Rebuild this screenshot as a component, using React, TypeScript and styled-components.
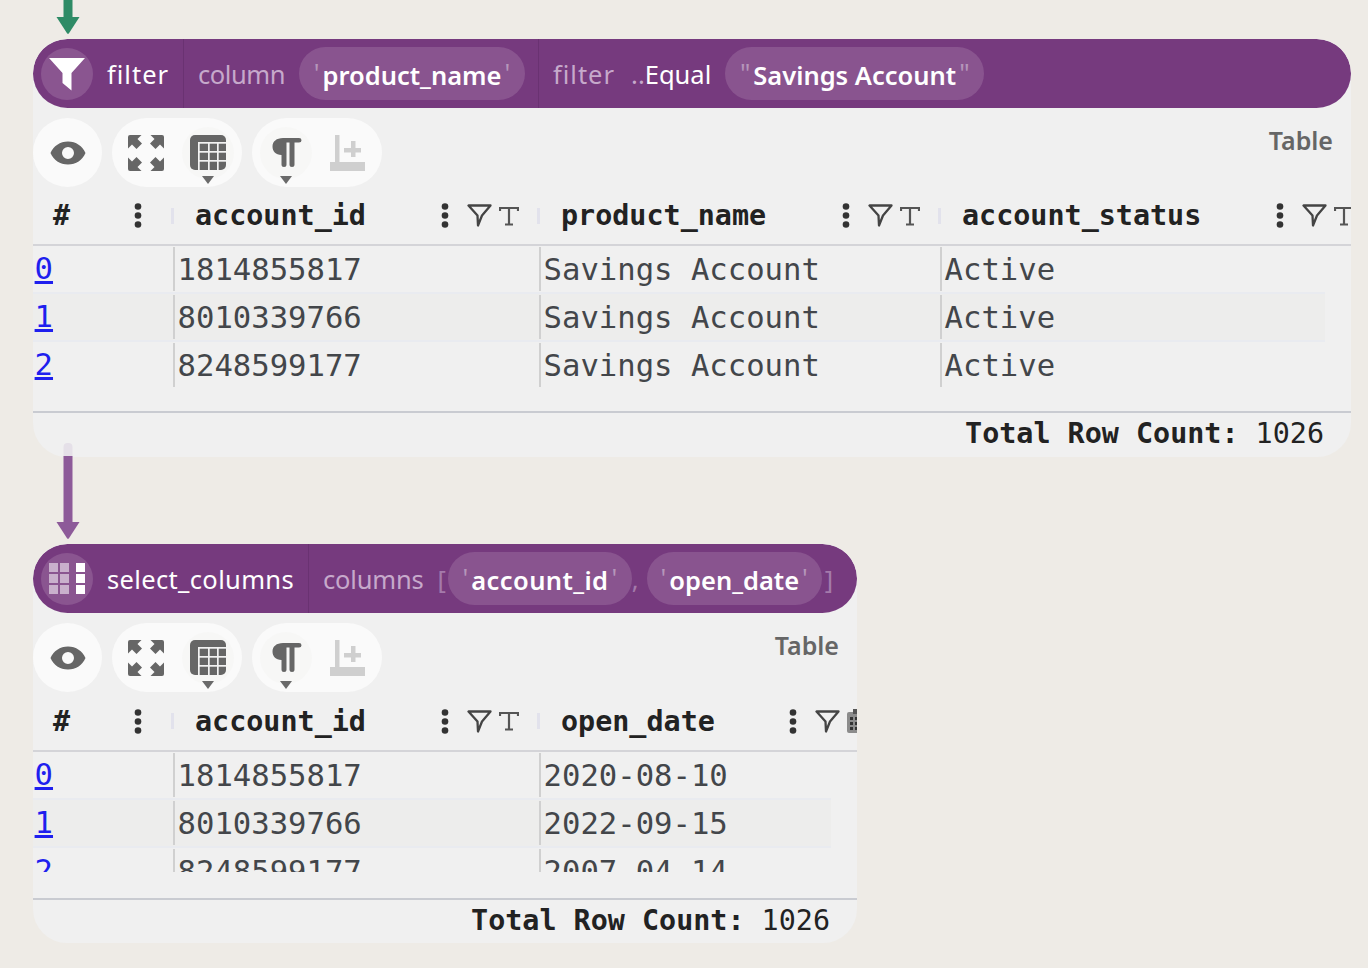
import React from "react";
import styled, { createGlobalStyle } from "styled-components";

const Global = createGlobalStyle`
  html, body { margin: 0; padding: 0; background: #eeebe6; }
  body { width: 1368px; height: 968px; overflow: hidden; }
`;

const Page = styled.div`
  width: 1368px;
  height: 968px;
  padding-left: 33px;
  box-sizing: border-box;
  font-family: "Noto Sans", sans-serif;
  font-variant-ligatures: none;
`;

const TopLink = styled.div`
  height: 39px;
  margin-left: 23px;
`;

const Link = styled.div`
  position: relative;
  height: 87px;
  margin-left: 23px;
  & > svg { position: absolute; top: -14px; left: 0; }
`;

const Card = styled.section<{ $w: number }>`
  width: ${(p) => p.$w}px;
  background: #f0f0f0;
  border-radius: 34px;
  overflow: hidden;
`;

const Bar = styled.header`
  height: 69px;
  background: #763a7e;
  border-radius: 35px;
  display: flex;
  align-items: center;
  color: #fff;
  font-size: 25.5px;
  white-space: nowrap;
`;

const TitleCell = styled.div`
  height: 100%;
  display: flex;
  align-items: center;
  padding: 0 14px 0 8px;
  border-right: 1px solid #6a3272;
`;

const Title = styled.span<{ $spread: number }>`
  letter-spacing: ${(p) => p.$spread}px;
`;

const Badge = styled.div`
  width: 52px;
  height: 52px;
  border-radius: 50%;
  background: #8a5590;
  display: flex;
  align-items: center;
  justify-content: center;
  margin-right: 14px;
`;

const Args = styled.div<{ $edge?: boolean }>`
  display: flex;
  align-items: center;
  height: 100%;
  padding: 0 ${(p) => (p.$edge ? 13 : 14)}px 0 14px;
  border-right: ${(p) => (p.$edge ? "1px solid #6a3272" : "0")};
`;

const Faint = styled.span<{ $gap?: number; $spread?: number }>`
  color: #c6a9cb;
  margin-right: ${(p) => p.$gap ?? 14}px;
  letter-spacing: ${(p) => p.$spread ?? 0}px;
`;

const Bracket = styled.span<{ $left?: number; $right?: number }>`
  color: #a47aab;
  margin-left: ${(p) => p.$left ?? 0}px;
  margin-right: ${(p) => p.$right ?? 0}px;
`;

const Equal = styled.span`
  color: #fff;
  margin-right: 14px;
`;

const Pill = styled.div<{ $w: number }>`
  width: ${(p) => p.$w}px;
  height: 53px;
  padding-top: 2px;
  box-sizing: border-box;
  border-radius: 27px;
  background: #89548f;
  display: flex;
  align-items: center;
  justify-content: center;
  font-weight: 600;
  gap: 3px;
  flex-shrink: 0;
`;

const PillText = styled.span<{ $spread: number }>`
  letter-spacing: ${(p) => p.$spread}px;
`;

const Quote = styled.span`
  color: #b596ba;
  font-weight: 400;
  align-self: center;
  margin-top: -6px;
`;

const ToolbarRow = styled.div`
  height: 69px;
  margin-top: 10px;
  display: flex;
  gap: 10px;
  position: relative;
`;

const ToolPill = styled.div<{ $w: number }>`
  width: ${(p) => p.$w}px;
  height: 69px;
  border-radius: 35px;
  background: #fafafa;
  display: flex;
  align-items: center;
  justify-content: center;
`;

const ToolSlot = styled.div<{ $active?: boolean }>`
  width: 52px;
  height: 52px;
  margin: 0 5px;
  display: flex;
  align-items: center;
  justify-content: center;
  border-radius: 50%;
  position: relative;
  background: ${(p) => (p.$active ? "#f7f7f6" : "transparent")};
`;

const Caret = styled.span`
  position: absolute;
  left: 50%;
  bottom: -5px;
  margin-left: -6px;
  width: 0;
  height: 0;
  border-left: 6px solid transparent;
  border-right: 6px solid transparent;
  border-top: 8px solid #6a6a6a;
`;

const Spacer = styled.div`
  flex: 1;
`;

const KindLabel = styled.div`
  font-size: 25px;
  font-weight: 600;
  color: #666;
  padding-right: 18px;
  line-height: 30px;
  margin-top: 7px;
  align-self: flex-start;
`;

const HeaderRow = styled.div<{ $h: number }>`
  height: ${(p) => p.$h}px;
  display: flex;
  align-items: center;
  overflow: hidden;
  border-bottom: 2px solid #d4d4d8;
  box-sizing: border-box;
  font-family: "DejaVu Sans Mono", monospace;
  font-size: 28.4px;
  font-weight: 700;
  color: #222;
`;

const IndexHead = styled.div`
  width: 140px;
  flex-shrink: 0;
  display: flex;
  align-items: center;
  padding-left: 20px;
  padding-right: 30px;
  box-sizing: border-box;
  justify-content: space-between;
`;

const ColHead = styled.div<{ $w: number }>`
  width: ${(p) => p.$w}px;
  flex-shrink: 0;
  box-sizing: border-box;
  display: flex;
  align-items: center;
  padding-right: 20px;
`;

const Sep = styled.span`
  width: 3px;
  height: 16px;
  background: #e2e2ec;
  margin-left: -2px;
  margin-right: 21px;
  flex-shrink: 0;
`;

const ColName = styled.span`
  flex: 1;
`;

const HeadIcons = styled.span`
  display: flex;
  align-items: center;
  gap: 7px;
`;

const DotsWrap = styled.span`
  display: flex;
  margin-right: 17px;
`;

const Body = styled.div<{ $h: number; $after: number }>`
  height: ${(p) => p.$h}px;
  margin-bottom: ${(p) => p.$after}px;
  overflow: hidden;
  font-family: "DejaVu Sans Mono", monospace;
  font-size: 30.6px;
  color: #43464a;
`;

const Row = styled.div<{ $w: number; $odd: boolean; $last: boolean }>`
  width: ${(p) => p.$w}px;
  height: 48px;
  box-sizing: border-box;
  display: flex;
  background: ${(p) => (p.$odd ? "#ededec" : "transparent")};
  border-bottom: ${(p) => (p.$last ? "0" : "2px solid #e9ebf0")};
`;

const IndexCell = styled.a`
  width: 140px;
  flex-shrink: 0;
  padding-left: 1.6px;
  box-sizing: border-box;
  color: #1f1fee;
  text-decoration: underline;
  line-height: 46px;
  height: 46px;
`;

const Cell = styled.div<{ $w: number }>`
  width: ${(p) => p.$w}px;
  flex-shrink: 0;
  box-sizing: border-box;
  border-left: 2px solid #d0d0d0;
  padding-left: 2.6px;
  line-height: 46px;
  height: 44px;
  margin-top: 1px;
  white-space: pre;
`;

const Foot = styled.footer<{ $h: number }>`
  height: ${(p) => p.$h}px;
  border-top: 2px solid #c9cbd1;
  box-sizing: border-box;
  display: flex;
  align-items: center;
  justify-content: flex-end;
  padding: 0 27px ${(p) => p.$h - 42}px 0;
  font-family: "DejaVu Sans Mono", monospace;
  font-size: 28.4px;
  color: #222;
  white-space: pre;
`;

const FootLabel = styled.b`
  font-weight: 700;
`;

const Arrow = ({ h, color, fade }: { h: number; color: string; fade?: number }) => (
  <svg width="24" height={h} viewBox={`0 0 24 ${h}`} style={{ display: "block" }}>
    {fade ? <rect x="7.5" y="0" width="9" height={fade + 4} rx="4" fill="#e5e0e8" /> : null}
    <rect x="7.5" y={fade ?? 0} width="9" height={h - (fade ?? 0) - 10} fill={color} />
    <path d={`M0.5 ${h - 18} H23.5 L12.8 ${h - 1.5} Q12 ${h - 0.8} 11.2 ${h - 1.5} Z`} fill={color} />
  </svg>
);

const FilterGlyph = () => (
  <svg width="36" height="34" viewBox="0 0 36 34">
    <path d="M0 1 H36 L22.500 16 V33.500 L13.500 26 V16 Z" fill="#fff" />
  </svg>
);

const ColumnsGlyph = () => (
  <svg width="36" height="32" viewBox="0 0 36 32">
    {[0, 1, 2].flatMap((r) =>
      [0, 1].map((c) => <rect key={`${r}${c}`} x={c * 11} y={r * 11} width="9" height="9" fill="#c9b0cc" />)
    )}
    {[0, 1, 2].map((r) => (
      <rect key={r} x="27" y={r * 11} width="9" height="9" fill="#fff" />
    ))}
  </svg>
);

const Eye = () => (
  <svg width="36" height="24" viewBox="0 0 36 24">
    <path
      fillRule="evenodd"
      d="M18 0.5 C26 0.5 32.5 5 35.5 12 C32.5 19 26 23.5 18 23.5 C10 23.5 3.500 19 0.5 12 C3.500 5 10 0.5 18 0.5 Z M18 6 A6 6 0 1 0 18 18 A6 6 0 1 0 18 6 Z"
      fill="#666"
    />
  </svg>
);

const Corner = ({ t }: { t: string }) => (
  <path transform={t} d="M0 2 Q0 0 2 0 H13.500 L9.500 4 L14 8.500 L8.500 14 L4 9.500 L0 13.500 Z" />
);

const Expand = () => (
  <svg width="36" height="36" viewBox="0 0 36 36" fill="#666">
    <Corner t="" />
    <Corner t="translate(36 0) scale(-1 1)" />
    <Corner t="translate(0 36) scale(1 -1)" />
    <Corner t="translate(36 36) scale(-1 -1)" />
  </svg>
);

const TableGlyph = () => (
  <svg width="36" height="35" viewBox="0 0 36 35">
    <rect width="36" height="35" rx="5" fill="#666" />
    {[7, 16, 25].map((y) => (
      <rect key={y} x="8" y={y} width="28" height="1.700" fill="#f2f2f2" />
    ))}
    {[8, 18, 27].map((x) => (
      <rect key={x} x={x} y="7" width="1.700" height="28" fill="#f2f2f2" />
    ))}
  </svg>
);

const Pilcrow = () => (
  <svg width="30" height="29" viewBox="0 0 30 29" fill="#666" style={{ marginLeft: 2 }}>
    <path d="M11 0 H27 Q29.500 0 29.500 2.200 Q29.500 4.500 27 4.500 H22.500 V26.500 Q22.500 29 20 29 Q17.500 29 17.500 26.500 V4.500 H14.500 V26.500 Q14.500 29 12 29 Q9.500 29 9.500 26.500 V17 C3.500 17 0.500 13 0.500 8.500 C0.500 3.500 4.500 0 11 0 Z" />
  </svg>
);

const AddRow = () => (
  <svg width="36" height="36" viewBox="0 0 36 36" fill="#cfcfcf">
    <rect x="5" y="0" width="4.500" height="27" />
    <rect x="0" y="27" width="35" height="9" />
    <rect x="14" y="13" width="17" height="4.500" />
    <rect x="21" y="6" width="4.500" height="16" />
  </svg>
);

const Dots = () => (
  <svg width="10" height="25" viewBox="0 0 10 25" fill="#333">
    <circle cx="5" cy="3.500" r="3.300" />
    <circle cx="5" cy="12.500" r="3.300" />
    <circle cx="5" cy="21.500" r="3.300" />
  </svg>
);

const Funnel = () => (
  <svg width="25" height="23" viewBox="0 0 25 23" fill="none" stroke="#444" strokeWidth="2.300" strokeLinejoin="round">
    <path d="M1.500 1.500 H23.500 L15 11.500 L11 21.500 L10.500 11.500 Z" />
  </svg>
);

const TypeT = () => (
  <svg width="20" height="20" viewBox="0 0 20 20" fill="none" stroke="#555" strokeWidth="2.200">
    <path d="M1 5 V2 H19 V5 M10 2 V18.500 M6 18.500 H14" />
  </svg>
);

const Calendar = () => (
  <svg width="20" height="24" viewBox="0 0 20 24">
    <rect x="0" y="3" width="20" height="21" rx="2" fill="#8c8c8c" />
    <rect x="6" y="0" width="4" height="5" fill="#555" />
    {[0, 1, 2].flatMap((r) =>
      [0, 1, 2].map((c) => <rect key={`${r}${c}`} x={3 + c * 5} y={8 + r * 5} width="3" height="3" fill="#333" />)
    )}
  </svg>
);

type Col = { name: string; head: number; cell: number; icon: "t" | "date" };

type Props = {
  width: number;
  headH: number;
  bodyH: number;
  bodyAfter: number;
  footH: number;
  rowW: number;
  icon: React.ReactNode;
  title: string;
  spread: number;
  args: React.ReactNode;
  cols: Col[];
  rows: string[][];
};

const Node = ({ width, headH, bodyH, bodyAfter, footH, rowW, icon, title, spread, args, cols, rows }: Props) => (
  <Card $w={width}>
    <Bar>
      <TitleCell>
        <Badge>{icon}</Badge>
        <Title $spread={spread}>{title}</Title>
      </TitleCell>
      {args}
    </Bar>
    <ToolbarRow>
      <ToolPill $w={69}>
        <ToolSlot>
          <Eye />
        </ToolSlot>
      </ToolPill>
      <ToolPill $w={130}>
        <ToolSlot>
          <Expand />
        </ToolSlot>
        <ToolSlot $active>
          <TableGlyph />
          <Caret />
        </ToolSlot>
      </ToolPill>
      <ToolPill $w={130}>
        <ToolSlot $active>
          <Pilcrow />
          <Caret />
        </ToolSlot>
        <ToolSlot>
          <AddRow />
        </ToolSlot>
      </ToolPill>
      <Spacer />
      <KindLabel>Table</KindLabel>
    </ToolbarRow>
    <HeaderRow $h={headH}>
      <IndexHead>
        <span>#</span>
        <Dots />
      </IndexHead>
      {cols.map((c) => (
        <ColHead key={c.name} $w={c.head}>
          <Sep />
          <ColName>{c.name}</ColName>
          <DotsWrap>
            <Dots />
          </DotsWrap>
          <HeadIcons>
            <Funnel />
            {c.icon === "t" ? <TypeT /> : <Calendar />}
          </HeadIcons>
        </ColHead>
      ))}
    </HeaderRow>
    <Body $h={bodyH} $after={bodyAfter}>
      {rows.map((r, i) => (
        <Row key={i} $w={rowW} $odd={i === 1} $last={i === rows.length - 1}>
          <IndexCell href="#">{i}</IndexCell>
          {r.map((v, j) => (
            <Cell key={j} $w={cols[j].cell}>
              {v}
            </Cell>
          ))}
        </Row>
      ))}
    </Body>
    <Foot $h={footH}>
      <FootLabel>Total Row Count:</FootLabel> 1026
    </Foot>
  </Card>
);

const Spec = ({ text, w, q = "'", spread = 0 }: { text: string; w: number; q?: string; spread?: number }) => (
  <Pill $w={w}>
    <Quote>{q}</Quote>
    <PillText $spread={spread}>{text}</PillText>
    <Quote>{q}</Quote>
  </Pill>
);

export default function App() {
  return (
    <Page>
      <Global />
      <TopLink>
        <svg width="24" height="35" viewBox="0 0 24 35" style={{ display: "block" }}>
          <rect x="7.500" y="0" width="9" height="22" fill="#2e8b66" />
          <path d="M0.5 17 H23.500 L12.800 33.500 Q12 34.200 11.200 33.500 Z" fill="#2e8b66" />
        </svg>
      </TopLink>
      <Node
        width={1318}
        headH={59}
        bodyH={165}
        bodyAfter={0}
        footH={46}
        rowW={1292}
        icon={<FilterGlyph />}
        title="filter"
        spread={1}
        args={
          <>
            <Args $edge>
              <Faint $spread={-0.45}>column</Faint>
              <Spec text="product_name" w={226} />
            </Args>
            <Args>
              <Faint $spread={1} $gap={16}>filter</Faint>
              <Faint $gap={0}>..</Faint>
              <Equal>Equal</Equal>
              <Spec text="Savings Account" w={259} q={'"'} />
            </Args>
          </>
        }
        cols={[
          { name: "account_id", head: 366, cell: 366, icon: "t" },
          { name: "product_name", head: 401, cell: 401, icon: "t" },
          { name: "account_status", head: 434, cell: 385, icon: "t" },
        ]}
        rows={[
          ["1814855817", "Savings Account", "Active"],
          ["8010339766", "Savings Account", "Active"],
          ["8248599177", "Savings Account", "Active"],
        ]}
      />
      <Link>
        <Arrow h={97} color="#8d5a99" fade={13} />
      </Link>
      <Node
        width={824}
        headH={60}
        bodyH={120}
        bodyAfter={26}
        footH={45}
        rowW={798}
        icon={<ColumnsGlyph />}
        title="select_columns"
        spread={0.35}
        args={
          <Args>
            <Faint $spread={-0.2}>columns</Faint>
            <Bracket $right={2}>[</Bracket>
            <Spec text="account_id" w={184} spread={0.4} />
            <Bracket $right={8}>,</Bracket>
            <Spec text="open_date" w={175} />
            <Bracket $left={3}>]</Bracket>
          </Args>
        }
        cols={[
          { name: "account_id", head: 366, cell: 366, icon: "t" },
          { name: "open_date", head: 348, cell: 292, icon: "date" },
        ]}
        rows={[
          ["1814855817", "2020-08-10"],
          ["8010339766", "2022-09-15"],
          ["8248599177", "2007-04-14"],
        ]}
      />
    </Page>
  );
}
